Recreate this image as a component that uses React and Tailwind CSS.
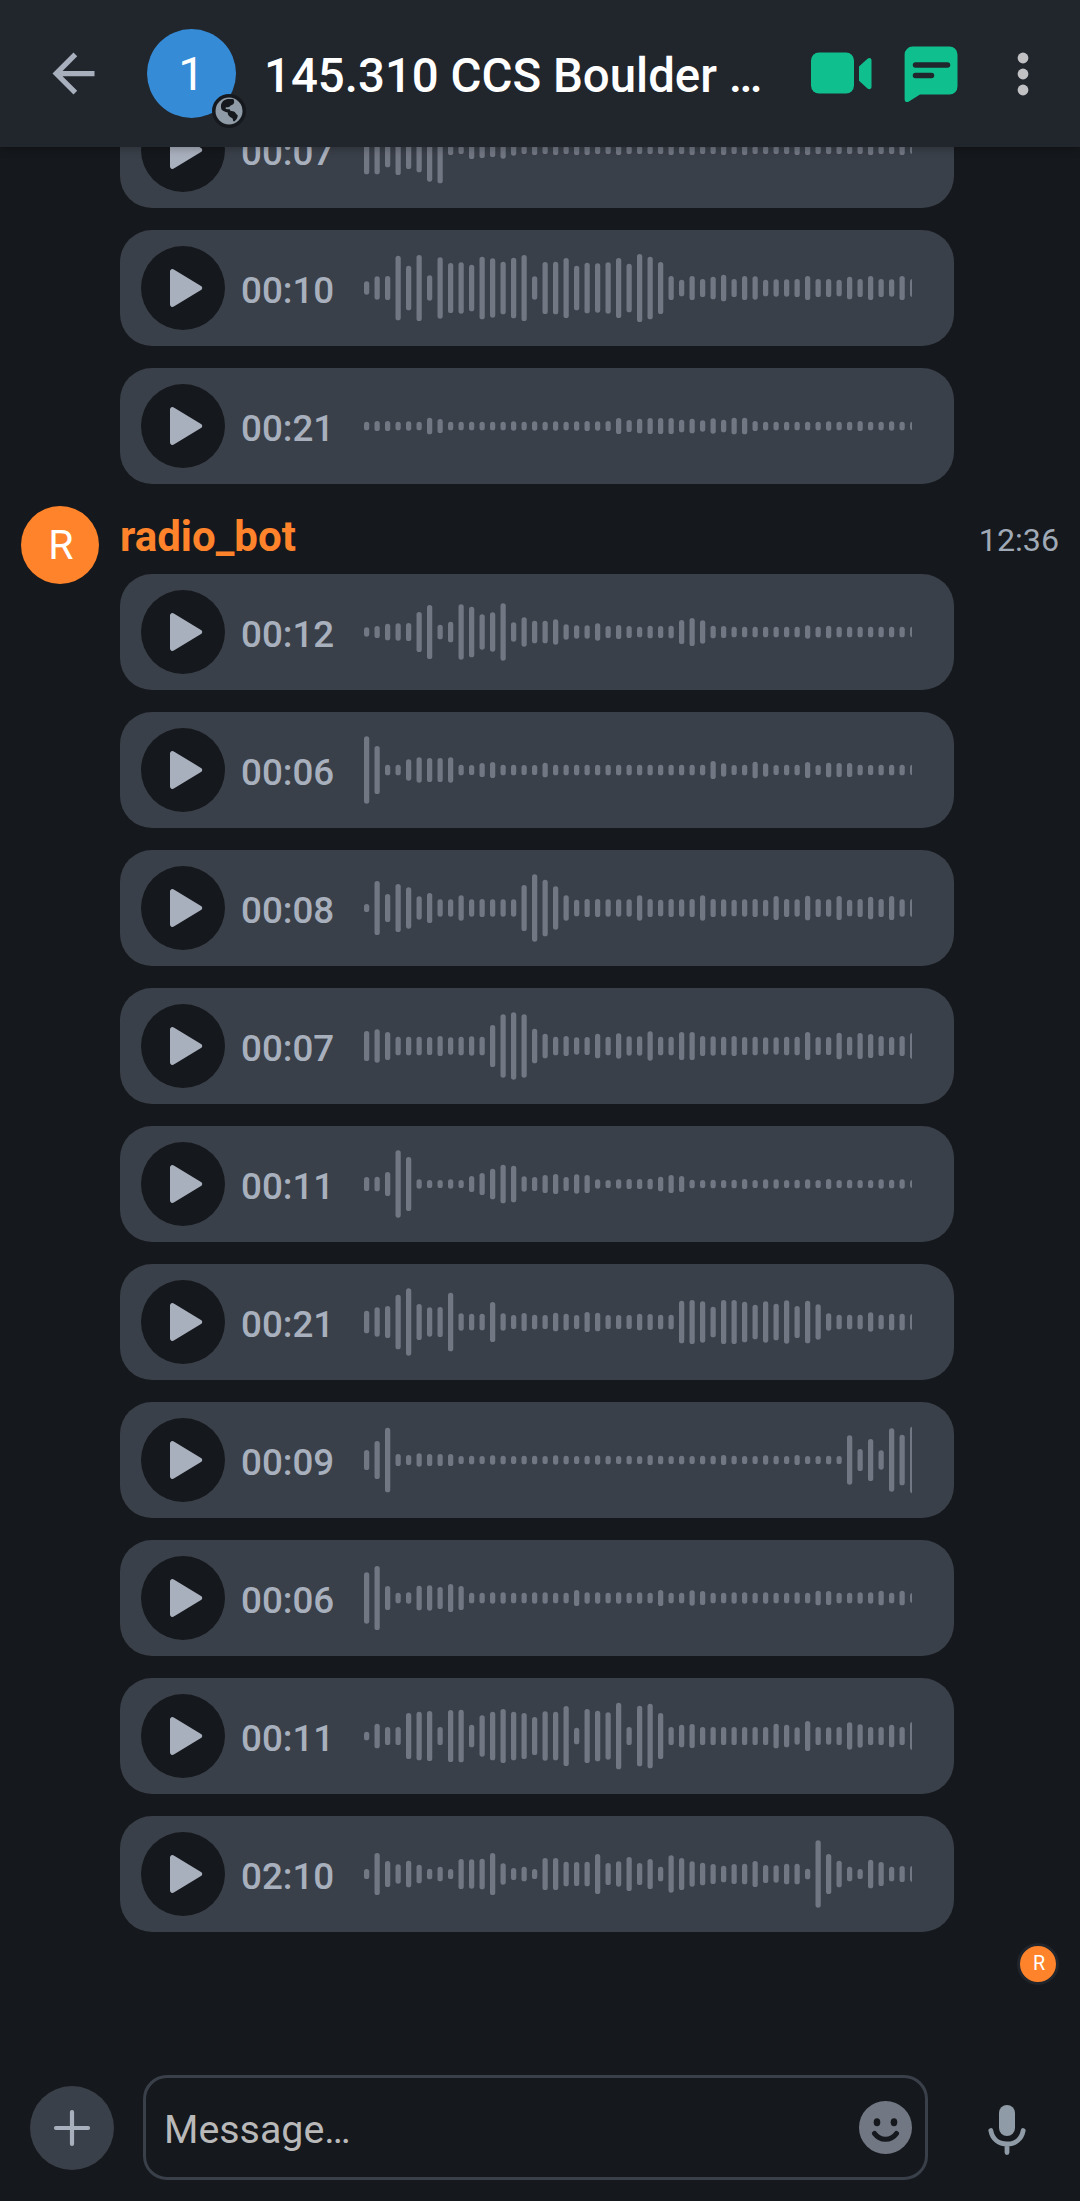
const TOP_MESSAGES = [
  {
    time: "00:07",
    bars: [73,73,52,75,57,67,95,100,15,12,27,24,21,26,17,12,15,12,15,12,15,15,12,12,15,12,12,12,12,15,12,15,12,12,15,12,15,12,12,12,12,15,15,12,12,12,12,12,15,12,12,15,12],
  },
  {
    time: "00:10",
    bars: [20,35,36,97,67,99,38,92,75,77,70,94,89,79,91,99,35,78,79,90,67,76,74,77,90,73,102,94,78,36,25,36,27,34,40,27,36,35,25,26,26,27,36,27,27,25,34,27,36,27,26,36,27],
  },
  {
    time: "00:21",
    bars: [13,15,15,13,14,13,25,21,13,13,13,13,13,13,14,13,14,13,14,13,14,15,14,15,24,18,22,24,24,24,19,22,17,23,19,25,25,15,13,13,13,13,13,13,14,13,13,15,13,13,14,13,13],
  },
];

const MESSAGES = [
  {
    time: "00:12",
    bars: [14,18,25,26,27,60,81,22,31,83,76,53,59,86,29,44,34,34,38,23,20,20,26,18,21,18,16,19,18,19,36,42,35,19,18,16,16,16,16,16,16,16,20,16,19,16,16,16,16,16,16,16,16],
  },
  {
    time: "00:06",
    bars: [101,72,16,16,32,38,36,36,38,16,15,21,24,16,16,15,15,22,16,16,16,16,16,16,16,16,16,16,16,16,16,16,16,27,20,15,16,25,20,15,16,16,24,15,22,21,21,16,15,16,16,16,16],
  },
  {
    time: "00:08",
    bars: [12,81,42,72,62,35,45,26,26,38,26,27,26,26,26,69,101,85,65,38,25,27,27,26,26,26,38,27,25,27,26,27,38,27,26,25,26,27,25,36,27,26,37,27,26,36,25,27,34,27,36,26,27],
  },
  {
    time: "00:07",
    bars: [45,50,42,28,28,28,27,30,26,28,29,28,63,95,101,95,52,37,28,30,26,27,37,28,38,29,29,44,28,28,42,42,30,29,28,30,27,28,26,26,28,28,42,27,27,40,28,39,36,30,27,30,39],
  },
  {
    time: "00:11",
    bars: [21,22,36,101,81,14,12,12,14,12,24,33,46,58,55,23,21,27,30,21,29,27,14,12,14,15,15,16,22,27,24,13,12,13,12,13,15,12,14,14,12,13,14,12,15,12,13,12,12,14,13,14,12],
  },
  {
    time: "00:21",
    bars: [34,44,48,82,101,54,44,45,88,26,25,25,60,26,21,27,22,21,28,25,21,30,28,21,21,21,25,24,22,22,64,66,62,46,66,66,61,52,62,55,65,48,64,53,26,22,22,22,29,22,25,25,24],
  },
  {
    time: "00:09",
    bars: [30,57,97,18,15,20,18,18,18,12,13,12,14,13,12,13,13,12,14,13,12,13,14,13,12,13,12,15,13,12,13,12,13,13,15,13,12,12,14,13,12,15,12,12,13,12,74,33,63,29,95,76,100],
  },
  {
    time: "00:06",
    bars: [77,96,36,16,17,37,38,33,42,36,16,16,17,17,16,16,17,17,16,16,24,17,17,16,17,16,17,16,24,16,16,23,21,16,16,17,17,16,17,16,16,17,16,22,21,16,16,17,17,22,16,22,15],
  },
  {
    time: "00:11",
    bars: [13,37,27,27,69,73,75,27,78,79,34,62,73,81,73,69,57,74,73,90,25,81,76,71,100,27,91,97,69,27,34,36,27,27,27,27,27,27,27,37,34,26,45,27,26,27,41,35,27,27,34,27,42],
  },
  {
    time: "02:10",
    bars: [15,63,39,29,40,28,16,22,15,45,44,46,63,32,18,22,15,48,48,37,36,37,60,33,38,51,33,45,22,56,48,38,34,30,25,30,31,39,27,26,31,31,16,101,60,40,22,15,43,36,22,24,24],
  },
];

function Waveform({ bars }) {
  return (
    <svg width="548" height="80" viewBox="0 0 548 80" className="ml-auto mr-[42px] shrink-0" fill="#717783">
      {bars.map((b, i) => (
        <rect key={i} x={i * 10.5} y={40 - b / 3} width="5.25" height={(b * 2) / 3} rx="2.6" />
      ))}
    </svg>
  );
}

function VoiceMessage({ time, bars }) {
  return (
    <div className="flex h-[116px] w-[834px] shrink-0 items-center rounded-[32px] bg-[#3a4049] pl-[21px]">
      <button className="flex size-[84px] shrink-0 items-center justify-center rounded-full bg-[#15181c]">
        <svg width="84" height="84" viewBox="0 0 84 84" fill="#a9b0bd">
          <path d="M29 25.500a2.500 2.500 0 0 1 3.800-2.100L60 39.900a2.400 2.400 0 0 1 0 4.200L32.800 60.600a2.500 2.500 0 0 1-3.800-2.100Z" />
        </svg>
      </button>
      <span className="ml-[16px] mt-[5px] text-[36.75px] leading-[44px] font-medium text-[#a9b0bd]">{time}</span>
      <Waveform bars={bars} />
    </div>
  );
}

function Header() {
  return (
    <header className="relative z-10 flex h-[147px] shrink-0 items-center bg-[#21252c] pl-[42px] shadow-[0_2px_8px_rgba(0,0,0,0.25)]">
      <svg width="63" height="63" viewBox="0 0 24 24" fill="#a9b0bd" className="shrink-0">
        <path d="M20 11H7.830l5.590-5.590L12 4l-8 8 8 8 1.410-1.410L7.830 13H20v-2z" />
      </svg>
      <div className="relative ml-[42px] flex size-[89px] shrink-0 items-center justify-center rounded-full bg-[#368bd6]">
        <span className="text-[47px] leading-none text-white">1</span>
        <svg width="34" height="34" viewBox="0 0 34 34" className="absolute left-[65px] top-[65px]">
          <circle cx="17" cy="17" r="17" fill="#15181c" />
          <circle cx="17" cy="17" r="13.500" fill="#8f9ba6" />
          <path
            d="M9 11C10 6.500 14 5 17 5h4c1.500 1 1 2.500 1.200 3.500-.5 1.500-2 2.500-3.500 3-1 .5-.8 1.500-1.800 1.500-1 .3-2.500 0-3.200.5-.5 1 .3 1.600 1.500 1.700h2c1 .3 1.300 1.300 1.300 2 2-.4 4 .3 5 1.800l1.200 1.500 1 .7c.2 2-1 4.500-3.500 6.300l-1-.5c-.3-1-.3-2.500-1.200-3-1.500-.5-3-1.500-4-3.500l-.3-2c-2.500-.8-5-1.500-6.200-3-.6-1.500-.6-3-.5-4.500Z"
            fill="#15181c"
          />
        </svg>
      </div>
      <h1 className="ml-[28px] mt-[5px] w-[540px] shrink-0 whitespace-nowrap text-[47.400px] leading-[56px] font-medium text-white">
        145.310 CCS Boulder …
      </h1>
      <svg width="64" height="60" viewBox="0 0 64 60" fill="#10bf8e" className="ml-[5px] shrink-0">
        <rect x="2" y="8.500" width="43" height="41" rx="8" />
        <path d="M50 22.500 58.500 14.800c1.700-1.600 4-.7 4 1.400V43c0 2.100-2.300 3-4 1.400L50 36.700Z" />
      </svg>
      <svg width="54" height="60" viewBox="0 0 54 60" className="ml-[31px] shrink-0">
        <path
          d="M8.500 2.500h37a8 8 0 0 1 8 8v32a8 8 0 0 1-8 8H16L4.500 57.700C2.800 58.700.6 57.800.6 55.500v-45a8 8 0 0 1 7.900-8Z"
          fill="#10bf8e"
        />
        <path d="M11.500 21h32M11.500 31.500h16" stroke="#21252c" strokeWidth="5.500" strokeLinecap="round" />
      </svg>
      <svg width="12" height="48" viewBox="0 0 12 48" fill="#c1c1c4" className="ml-[58.500px] shrink-0">
        <circle cx="6" cy="8" r="5.400" />
        <circle cx="6" cy="24" r="5.400" />
        <circle cx="6" cy="40" r="5.400" />
      </svg>
    </header>
  );
}

function Composer() {
  return (
    <footer className="mt-auto mb-[21px] flex h-[105px] shrink-0 items-center pl-[30px]">
      <button className="mt-px flex size-[84px] shrink-0 items-center justify-center rounded-full bg-[#3a4049]">
        <svg width="42" height="42" viewBox="0 0 42 42" stroke="#a9b0bd" strokeWidth="4.200" strokeLinecap="round">
          <path d="M21 5v32M5 21h32" />
        </svg>
      </button>
      <div className="ml-[29px] flex h-[105px] w-[785px] shrink-0 items-center rounded-[24px] border-[3px] border-[#3a4049] pl-[18px] pr-[13px]">
        <span className="mt-[5px] text-[39.400px] leading-[46px] text-[#b9b9ba]">Message…</span>
        <svg width="53" height="53" viewBox="0 0 53 53" className="ml-auto">
          <circle cx="26.500" cy="26.500" r="26.500" fill="#717783" />
          <ellipse cx="18" cy="21.200" rx="3.300" ry="4" fill="#15181c" />
          <ellipse cx="35" cy="21.200" rx="3.300" ry="4" fill="#15181c" />
          <path d="M15.500 32.500c5.600 7.700 16.400 7.700 22 0" fill="none" stroke="#15181c" strokeWidth="5" strokeLinecap="round" />
        </svg>
      </div>
      <svg width="40" height="54" viewBox="0 0 40 54" className="ml-[58.500px] mt-[5px] shrink-0">
        <rect x="12" y="2" width="16" height="31" rx="8" fill="#8f9ba6" />
        <path
          d="M3.800 27.500C5.500 36.500 12 41 20 41s14.500-4.500 16.200-13.500M20 41v8.500"
          fill="none"
          stroke="#8f9ba6"
          strokeWidth="4.800"
          strokeLinecap="round"
        />
      </svg>
    </footer>
  );
}

export default function App() {
  return (
    <div className="flex h-[2201px] w-[1080px] flex-col overflow-hidden bg-[#15181c] font-[Roboto,sans-serif]">
      <Header />
      <main className="-mt-[55px] flex flex-col">
        <section className="flex flex-col gap-[22px] pl-[120px]">
          {TOP_MESSAGES.map((m, i) => (
            <VoiceMessage key={i} {...m} />
          ))}
        </section>
        <section className="mt-[22px] flex pl-[21px]">
          <div className="flex size-[78px] shrink-0 items-center justify-center rounded-full bg-[#ff832b] pl-[2px] text-[41px] leading-none text-white">
            R
          </div>
          <div className="ml-[21px] flex flex-1 flex-col gap-[22px]">
            <div className="-mb-[22px] flex h-[68px] items-start justify-between pr-[21px]">
              <h2 className="mt-[6px] text-[42px] leading-[49px] font-bold text-[#ff832b]">radio_bot</h2>
              <span className="mt-[16px] text-[32.200px] leading-[37px] text-[#a0aab6]">12:36</span>
            </div>
            {MESSAGES.map((m, i) => (
              <VoiceMessage key={i} {...m} />
            ))}
          </div>
        </section>
        <div className="mr-[21px] mt-[11px] flex size-[42px] items-center justify-center self-end rounded-full border-[3px] border-[#21252c] bg-[#ff832b] pl-[2px] text-[19.700px] leading-none text-white">
          R
        </div>
      </main>
      <Composer />
    </div>
  );
}
